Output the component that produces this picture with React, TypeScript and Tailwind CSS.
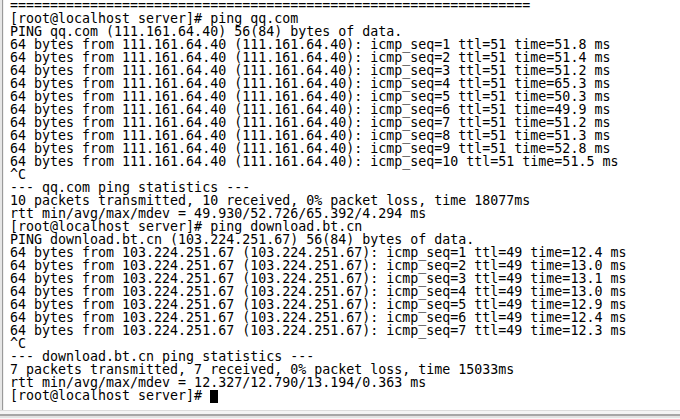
import React from 'react';

const Cursor: React.FC = () => (
  <span className="inline-block w-[8px] h-[13px] bg-black align-[-3px]" />
);

const App: React.FC = () => {
  const qq = Array.from({ length: 10 }, (_, i) => {
    const times = ['51.8', '51.4', '51.2', '65.3', '50.3', '49.9', '51.2', '51.3', '52.8', '51.5'];
    return `64 bytes from 111.161.64.40 (111.161.64.40): icmp_seq=${i + 1} ttl=51 time=${times[i]} ms`;
  });
  const bt = Array.from({ length: 7 }, (_, i) => {
    const times = ['12.4', '13.0', '13.1', '13.0', '12.9', '12.4', '12.3'];
    return `64 bytes from 103.224.251.67 (103.224.251.67): icmp_seq=${i + 1} ttl=49 time=${times[i]} ms`;
  });

  const lines = [
    '='.repeat(65),
    '[root@localhost server]# ping qq.com',
    'PING qq.com (111.161.64.40) 56(84) bytes of data.',
    ...qq,
    '^C',
    '--- qq.com ping statistics ---',
    '10 packets transmitted, 10 received, 0% packet loss, time 18077ms',
    'rtt min/avg/max/mdev = 49.930/52.726/65.392/4.294 ms',
    '[root@localhost server]# ping download.bt.cn',
    'PING download.bt.cn (103.224.251.67) 56(84) bytes of data.',
    ...bt,
    '^C',
    '--- download.bt.cn ping statistics ---',
    '7 packets transmitted, 7 received, 0% packet loss, time 15033ms',
    'rtt min/avg/max/mdev = 12.327/12.790/13.194/0.363 ms',
  ];

  return (
    <div className="w-[680px] h-[419px] bg-white flex flex-col overflow-hidden">
      <div className="flex-1 flex min-h-0">
        <div className="w-[2px] bg-[#e6e6e6]" />
        <div className="w-[1px] bg-[#9a9a9a]" />
        <div className="w-[1px] bg-[#f0f0f0]" />
        <div className="flex-1 min-w-0 overflow-hidden pl-[6px]">
          <pre className="-mt-[1px] text-[13.3px] leading-[13px] text-black font-['DejaVu_Sans_Mono',monospace] whitespace-pre">
            {lines.map((l, i) => (
              <div key={i}>{l}</div>
            ))}
            <div>
              [root@localhost server]# <Cursor />
            </div>
          </pre>
        </div>
      </div>
      <div className="h-[9px] flex flex-col shrink-0">
        <div className="h-[1px] bg-[#dcdcdc]" />
        <div className="h-[3px] bg-[#f4f4f4]" />
        <div className="h-[2px] bg-[#a6a6a6]" />
        <div className="h-[2px] bg-[#e2e2e2]" />
        <div className="h-[1px] bg-[#f7f7f7]" />
      </div>
    </div>
  );
};

export default App;
